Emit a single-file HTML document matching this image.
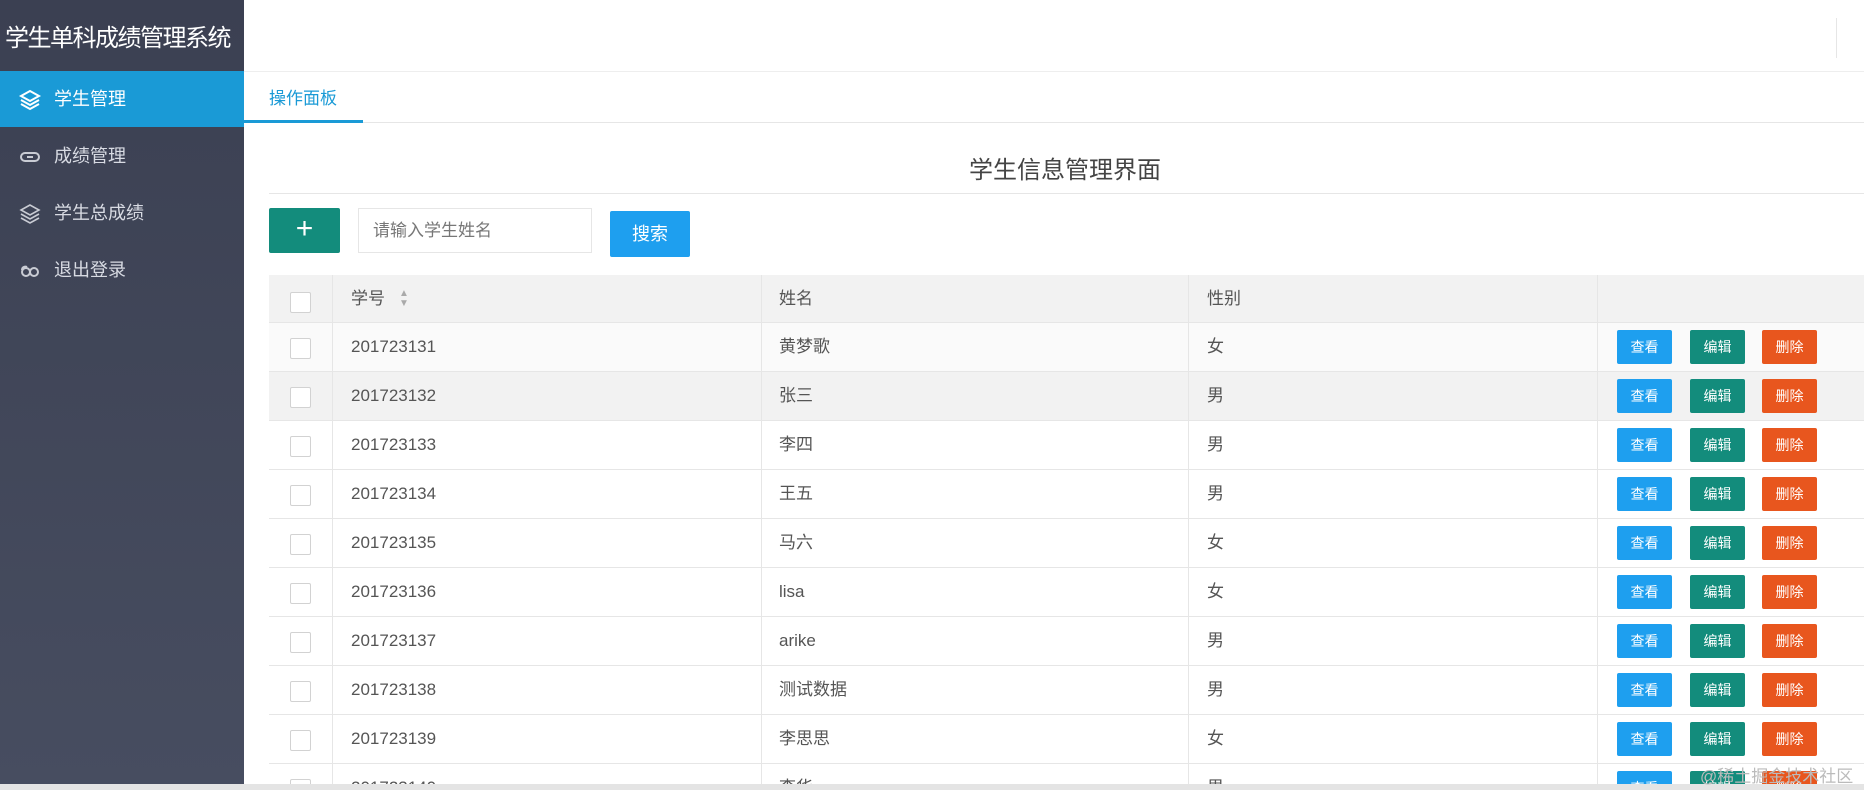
<!DOCTYPE html>
<html><head><meta charset="utf-8"><style>
*{margin:0;padding:0;box-sizing:border-box}
html,body{width:1864px;height:790px;overflow:hidden}
body{background:#fff;font-family:"Liberation Sans","Noto Sans CJK SC",sans-serif;position:relative;color:#555}
.side{position:absolute;left:0;top:0;width:244px;height:784px;background:linear-gradient(#3b4052,#474d60)}
.title{position:absolute;left:5px;top:18px;color:#fff;font-size:24px;white-space:nowrap;letter-spacing:-1.5px}
.item{position:absolute;left:0;width:244px;height:56px;color:#d8dbe3;font-size:18px;line-height:56px;padding-left:54px}
.item.act{background:#1a9ad6;color:#fff}
.item svg{position:absolute;left:18px;top:17px}
.abs{position:absolute}
.row{position:absolute;left:269px;right:0;height:49px;border-bottom:1px solid #e6e6e6}
.cell{position:absolute;top:0;line-height:48px;font-size:17px;color:#555}
.cb{position:absolute;left:21px;top:15px;width:21px;height:21px;border:1px solid #d2d2d2;background:#fff;border-radius:2px}
.vl{position:absolute;top:0;bottom:0;width:1px;background:#e6e6e6}
.btn{position:absolute;top:7px;width:55px;height:34px;color:#fff;font-size:14px;text-align:center;line-height:34px;border-radius:2px}
.b1{left:1348px;background:#1e9fef}.b2{left:1421px;background:#138c7c}.b3{left:1493px;background:#e8561e}
</style></head><body>
<div class="side">
<div class="title">学生单科成绩管理系统</div>
<div class="item act" style="top:71px"><svg width="24" height="24" viewBox="0 0 24 24" fill="none" stroke="#fff" stroke-width="2"><path d="M12 3L3 8l9 5 9-5z"/><path d="M3 12l9 5 9-5"/><path d="M3 16l9 5 9-5"/></svg>学生管理</div>
<div class="item" style="top:128px"><svg width="24" height="24" viewBox="0 0 24 24" fill="none" stroke="#c9ccd4" stroke-width="2"><rect x="3" y="8" width="18" height="8" rx="4"/><path d="M9 12h6"/></svg>成绩管理</div>
<div class="item" style="top:185px"><svg width="24" height="24" viewBox="0 0 24 24" fill="none" stroke="#c9ccd4" stroke-width="1.6"><path d="M12 3L3 8l9 5 9-5z"/><path d="M3 12l9 5 9-5"/><path d="M3 16l9 5 9-5"/></svg>学生总成绩</div>
<div class="item" style="top:242px"><svg width="24" height="24" viewBox="0 0 24 24" fill="none" stroke="#c9ccd4" stroke-width="2"><circle cx="8" cy="13" r="4"/><circle cx="16" cy="13" r="4"/><path d="M4 11c0-3 3-4 5-3"/></svg>退出登录</div>
</div>
<div class="abs" style="left:244px;top:71px;right:0;height:1px;background:#eee"></div>
<div class="abs" style="left:1836px;top:18px;width:1px;height:40px;background:#e6e6e6"></div>
<div class="abs" style="left:269px;top:84px;font-size:17px;color:#1a9ad6">操作面板</div>
<div class="abs" style="left:244px;top:122px;right:0;height:1px;background:#e6e6e6"></div>
<div class="abs" style="left:244px;top:120px;width:119px;height:3px;background:#1a9ad6"></div>
<div class="abs" style="left:969px;top:150px;font-size:24px;color:#444">学生信息管理界面</div>
<div class="abs" style="left:269px;top:193px;right:0;height:1px;background:#e6e6e6"></div>
<div class="abs" style="left:269px;top:208px;width:71px;height:45px;background:#138c7c;border-radius:2px;color:#fff;font-size:30px;text-align:center;line-height:42px">+</div>
<div class="abs" style="left:358px;top:208px;width:234px;height:45px;border:1px solid #e6e6e6;font-size:17px;color:#777;line-height:43px;padding-left:14px">请输入学生姓名</div>
<div class="abs" style="left:610px;top:211px;width:80px;height:46px;background:#1e9fef;border-radius:2px;color:#fff;font-size:18px;text-align:center;line-height:46px">搜索</div>
<div class="row" style="top:275px;height:48px;background:#f2f2f2"><div class="cb" style="top:17px"></div>
<div class="vl" style="left:63px"></div><div class="vl" style="left:492px"></div><div class="vl" style="left:919px"></div><div class="vl" style="left:1328px"></div>
<div class="cell" style="left:82px">学号</div><div class="abs" style="left:130px;top:14px;font-size:10px;color:#aaa;line-height:10px">▲<br>▼</div>
<div class="cell" style="left:510px">姓名</div><div class="cell" style="left:938px">性别</div></div>
<div id="rows"></div>
<div class="abs" style="left:0;top:784px;width:1864px;height:6px;background:#e4e4e4;z-index:5"></div>
<div class="abs" style="left:1700px;top:762px;font-size:17px;color:#bbb;z-index:5">@稀土掘金技术社区</div>
<script>
var d=[["201723131","黄梦歌","女"],["201723132","张三","男"],["201723133","李四","男"],["201723134","王五","男"],["201723135","马六","女"],["201723136","lisa","女"],["201723137","arike","男"],["201723138","测试数据","男"],["201723139","李思思","女"],["201723140","李华","男"]];
var h="";d.forEach(function(r,i){var bg=i==0?"#fafafa":i==1?"#f2f2f2":"#fff";
h+='<div class="row" style="top:'+(323+49*i)+'px;background:'+bg+'"><div class="cb"></div><div class="vl" style="left:63px"></div><div class="vl" style="left:492px"></div><div class="vl" style="left:919px"></div><div class="vl" style="left:1328px"></div><div class="cell" style="left:82px">'+r[0]+'</div><div class="cell" style="left:510px">'+r[1]+'</div><div class="cell" style="left:938px">'+r[2]+'</div><div class="btn b1">查看</div><div class="btn b2">编辑</div><div class="btn b3">删除</div></div>';});
document.getElementById("rows").innerHTML=h;
</script>
</body></html>
